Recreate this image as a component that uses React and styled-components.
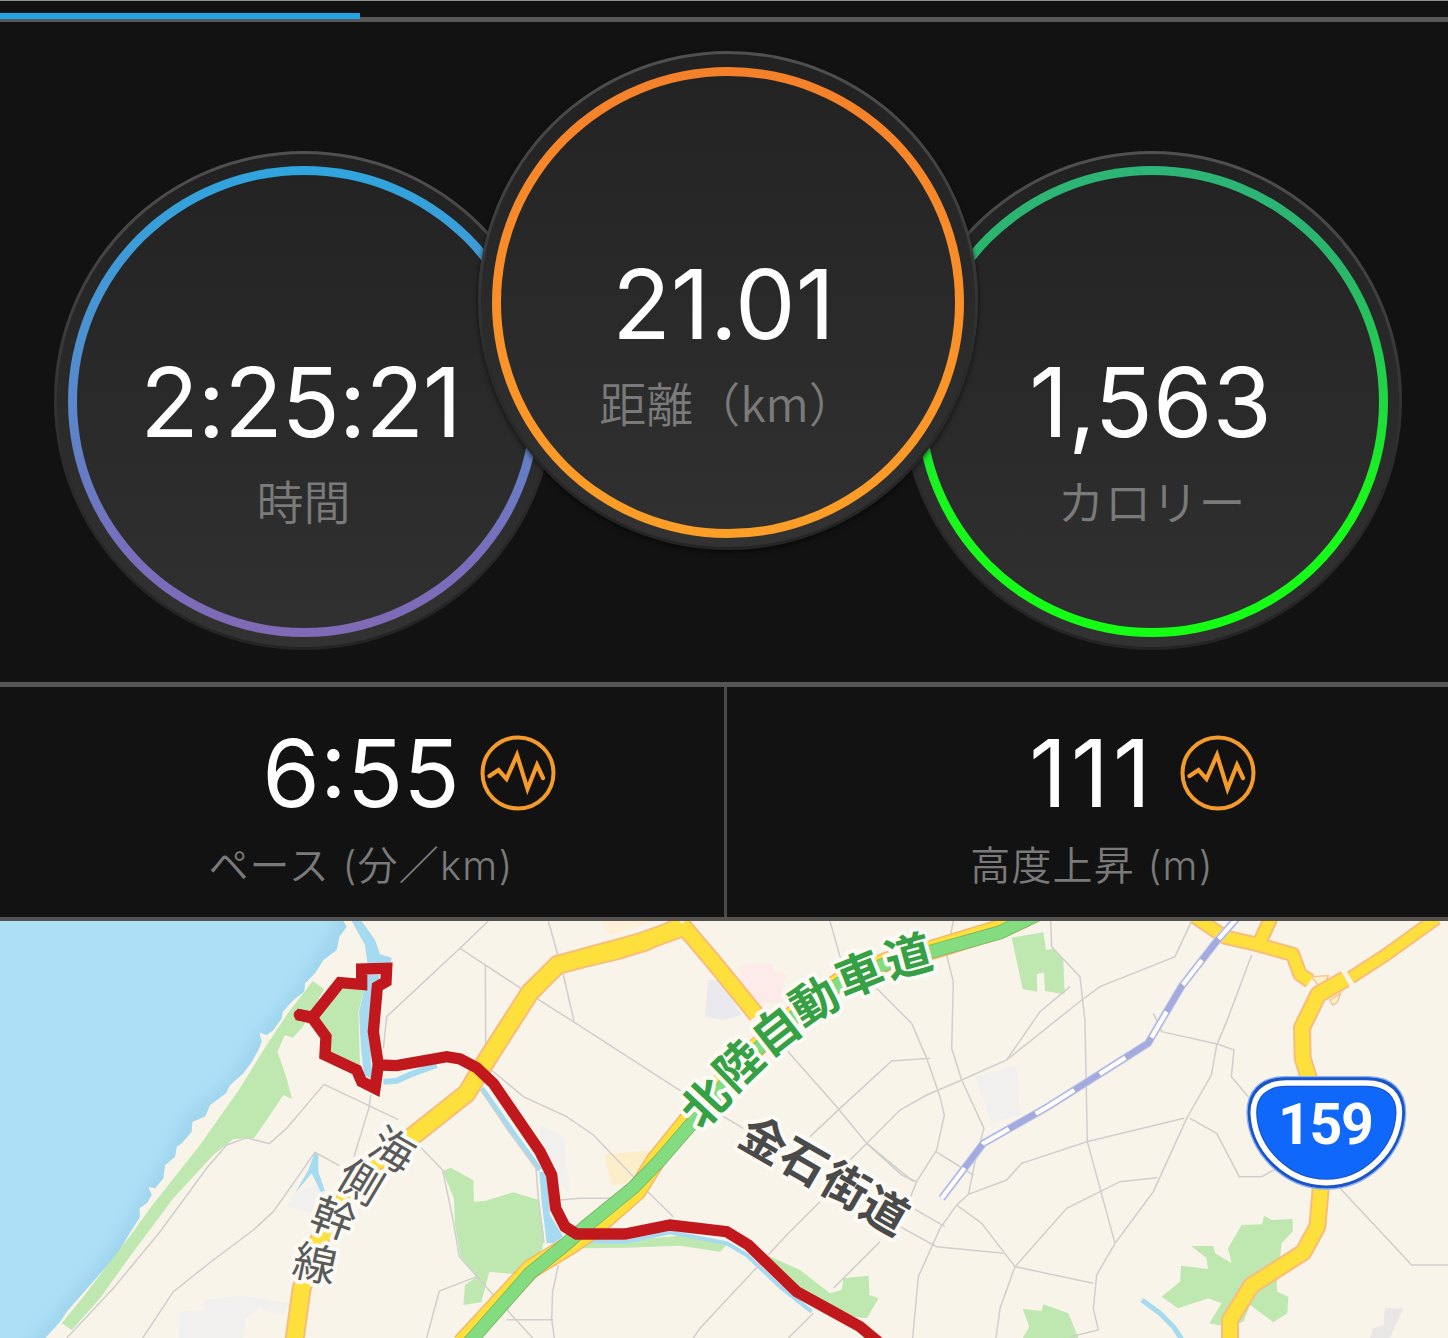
import React from 'react';
import styled, { createGlobalStyle } from 'styled-components';

const GlobalStyle = createGlobalStyle`
  * {
    box-sizing: border-box;
  }

  body {
    margin: 0;
    background-color: #121212;
    font-family: 'Inter', 'Noto Sans CJK JP', sans-serif;
  }
`;

const Screen = styled.div`
  display: flex;
  flex-direction: column;
  width: 1448px;
  height: 1338px;
  overflow: hidden;
  background-color: #121212;
  border-top: 1px solid #8c9090;
`;

const TabTrack = styled.div`
  height: 21px;
  padding-top: 12px;
  border-bottom: 5px solid #585858;
`;

const TabIndicator = styled.div`
  width: 360px;
  height: 6px;
  background-color: #23a3e6;
`;

const Summary = styled.section`
  display: flex;
  justify-content: center;
  height: 660px;
  padding: 29px 0 0 7px;
`;

/* Outer rim, brighter at the top */
const Disc = styled.div`
  position: relative;
  z-index: ${(props) => (props.$front ? 1 : 0)};
  flex: none;
  width: 500px;
  height: 499px;
  margin: ${(props) => (props.$front ? '0 -76px' : '100px 0 0')};
  padding: 3px;
  border-radius: 50%;
  background: linear-gradient(#505050, #3c3c3c 35%, #2a2a2b 65%, #242424);
  box-shadow: ${(props) => (props.$front ? '0 2px 5px rgba(0, 0, 0, 0.6)' : 'none')};
`;

const Band = styled.div`
  height: 100%;
  padding: ${(props) => (props.$front ? '13px 11px 9px' : '12px 11px 10px')};
  border-radius: 50%;
  background: linear-gradient(#212122, #2a2a2b 50%, #323232);
`;

const Ring = styled.div`
  height: 100%;
  padding: 9px;
  border-radius: 50%;
  background: linear-gradient(${(props) => props.$colors});
`;

const Face = styled.div`
  display: flex;
  flex-direction: column;
  align-items: center;
  height: 100%;
  padding-top: ${(props) => (props.$front ? 180 : 179)}px;
  border-radius: 50%;
  background: linear-gradient(#232323, #303030);
`;

const Value = styled.div`
  padding-right: ${(props) => props.$shift || 0}px;
  color: #ffffff;
  font-size: ${(props) => props.$size || 96}px;
  font-weight: 400;
  line-height: 96px;
  letter-spacing: ${(props) => props.$tracking || 0}px;
  white-space: nowrap;
`;

const Label = styled.div`
  margin-top: ${(props) => (props.$small ? 15 : 20)}px;
  color: #7a7a7a;
  font-family: ${(props) => (props.$small ? "'Inter', " : '')}'Noto Sans CJK JP', sans-serif;
  font-size: ${(props) => (props.$small ? 40 : 47)}px;
  font-weight: 350;
  line-height: 60px;
  letter-spacing: ${(props) => (props.$small ? 1.2 : 0)}px;
  white-space: nowrap;
`;

const Stats = styled.section`
  display: grid;
  grid-template-columns: 724px 1fr;
  height: 239px;
  border-top: 5px solid #555555;
  border-bottom: 4px solid #555252;
`;

const Stat = styled.div`
  display: flex;
  flex-direction: column;
  align-items: center;
  padding: 38px 2px 0 0;

  & + & {
    padding: 38px 0 0 9px;
    border-left: 3px solid #4a4a4a;
  }
`;

const StatRow = styled.div`
  display: grid;
  grid-template-columns: 1fr auto 1fr;
  align-items: center;
  width: 100%;
`;

const ChartButton = styled.button`
  grid-column: 3;
  width: 76px;
  height: 76px;
  margin-left: ${(props) => props.$gap}px;
  padding: 0;
  border: none;
  background: none;
`;

const StatValue = styled(Value)`
  grid-column: 2;
`;

const MapView = styled.svg`
  display: block;
  width: 1448px;
  height: 417px;
  flex: none;
  overflow: visible;
`;

const MapText = styled.text`
  font-family: 'Noto Sans CJK JP', sans-serif;
  font-size: ${(props) => props.$size}px;
  font-weight: ${(props) => props.$weight};
  fill: ${(props) => props.$color};
  stroke: #fcfaf4;
  stroke-width: 24px;
  stroke-linejoin: round;
  paint-order: stroke;
  text-anchor: middle;
`;

const ShieldText = styled.text`
  font-family: 'Roboto', sans-serif;
  font-size: 172px;
  font-weight: 700;
  letter-spacing: -4px;
  fill: #ffffff;
  text-anchor: middle;
`;

const discs = [
  {
    value: '2:25:21',
    label: '時間',
    colors: '#2fa5de, #4f8fd0 40%, #7a6dbb 85%, #806ab5',
    tracking: -1.1,
    shift: 6,
  },
  { value: '21.01', label: '距離（km）', colors: '#f5802a, #f98f29 50%, #fb9f27', shift: 8, front: true },
  { value: '1,563', label: 'カロリー', colors: '#2db577, #2ab56c 20%, #22d04a 45%, #18f61c 70%, #14ff14', shift: 2 },
];

const stats = [
  { value: '6:55', label: 'ペース (分／km)', gap: 20 },
  { value: '111', label: '高度上昇 (m)', gap: 25, tracking: 4 },
];

const coast =
  '0,18 1030,18 1040,35 1018,65 1010,105 970,135 945,175 915,205 912,230 880,255 848,290 845,310 820,345 800,360 778,352 785,380 775,405 755,440 730,475 690,510 678,535 630,570 615,605 577,620 575,650 545,685 530,695 525,725 495,750 490,790 465,820 445,815 455,840 440,865 418,880 420,905 395,945 350,1020 270,1110 200,1190 180,1220 130,1275 0,1275';

const shoreline =
  '1060,-20 1018,65 970,135 912,230 845,310 785,380 730,475 678,535 577,620 525,725 465,820 440,865 395,945 350,1020 270,1110 180,1220 100,1310';

const parks = [
  '938,198 972,222 930,300 905,340 878,368 855,360 832,410 860,490 876,552 850,540 800,615 762,670 700,672 640,720 520,850 400,1010 300,1150 215,1245 185,1225 250,1145 400,950 450,880 600,690 720,520 800,390 860,300',
  '1010,235 1040,212 1095,215 1075,290 1080,450 990,410 990,360 950,310',
  '1328,768 1352,758 1420,796 1422,860 1455,858 1540,832 1615,855 1632,960 1626,1005 1550,1078 1468,1070 1444,1162 1390,1170 1395,1110 1430,1085 1382,1025 1365,930 1362,850',
  '1740,985 1900,975 2060,960 2180,990 2160,1010 2040,992 1880,998 1750,1000',
  '2300,1020 2400,1065 2490,1135 2525,1125 2530,1090 2606,1082 2608,1140 2636,1150 2600,1210 2560,1205 2400,1140',
  '3035,68 3130,52 3138,105 3160,102 3190,135 3194,238 3135,228 3132,172 3110,178 3112,230 3068,222',
  '3068,1182 3125,1188 3130,1168 3205,1195 3240,1280 3062,1280 3088,1235',
  '3574,993 3640,993 3645,1015 3695,1045 3684,1000 3725,930 3786,928 3792,902 3815,915 3878,912 3878,950 3845,985 3830,1110 3832,1130 3865,1145 3862,1195 3820,1222 3750,1170 3730,1220 3680,1235 3628,1225 3665,1165 3625,1150 3534,1180 3485,1145 3540,1100 3543,1052 3624,1062 3620,1030',
];

const streets = [
  '200,1269 340,1120 480,950 620,760 680,690 740,668 808,686 860,640 972,508 1195,614',
  '1112,540 1108,575 1062,725',
  '428,1269 520,1130 640,1035 760,945 820,890 945,712 1018,752',
  '1465,18 1380,100 1160,305 1150,400',
  '1380,100 1570,225 1720,320 2030,520 2230,640',
  '1456,150 1457,390',
  '1645,18 1690,180 1722,318',
  '1250,685 1328,765 1360,920 1378,1025 1480,1140 1598,1269',
  '1478,468 1570,545 1700,605 1780,660 1945,832 2020,905',
  '1440,520 1520,640 1608,760 1615,850 1632,985',
  '1680,855 1740,850 1830,850',
  '1675,1050 1658,1130 1655,1212 1663,1269',
  '1520,1214 1660,1214',
  '1280,1269 1318,1128 1430,1085',
  '2490,18 2520,125 2635,225 2735,325 2780,430 2820,545 2833,600 2810,705 2750,800 2730,850',
  '2360,405 2510,575 2600,685 2705,780 2750,800',
  '2790,430 2675,438 2520,580 2430,665',
  '2600,685 2740,800',
  '3210,215 3120,290 3020,435 2885,495 2780,540 2700,585 2605,680 2550,735',
  '2860,18 2840,120 2860,200 2855,400 2885,495 2952,640 2925,740 2905,840',
  '2808,710 2920,780',
  '3152,18 3155,95 3240,185 3255,320 3262,680 3345,985',
  '3575,18 3525,125 3300,215 3245,255 3020,435',
  '3460,295 3485,350 3655,388 3702,405 3694,485 3745,545',
  '3755,120 3680,320 3650,390 3634,480 3560,610 3460,830 3345,985 3290,1080 3280,1180 3295,1245 3210,1265',
  '3552,610 3260,680 3065,745 3020,795 2905,838 2870,870 2820,940 2755,1085 2738,1269',
  '2700,935 2810,995 3010,1015',
  '2740,880 2835,935',
  '2870,870 2945,925 3045,1055 3280,1105',
  '3045,1055 3200,880 3360,800 3472,788',
  '3045,1055 3000,1180 2988,1269',
  '3570,610 3650,655 3718,785 3785,785 3830,760',
  '4020,820 4235,1050 4344,1050',
  '2460,860 2360,960 2240,1090 2100,1240 2080,1269',
  '2640,980 2500,1120',
  '2440,1195 2365,1269',
];

const yellowRoads = [
  { points: '882,1285 905,1120 950,990 1010,880 1090,770 1240,662 1400,535 1460,435 1590,232 1672,150 1920,82 2045,38', width: 48 },
  { points: '1672,150 1850,108 1935,82 2045,30', width: 44 },
  { points: '2045,28 2140,140 2270,300', width: 42 },
  { points: '3584,5 3674,66 3770,88 3878,118 3900,178 3930,198', width: 34 },
  { points: '3812,10 3780,80', width: 34 },
  { points: '4310,10 4154,122 4052,188', width: 30 },
  { points: '4036,192 3955,238 3906,338 3908,430 3930,500', width: 42 },
  { points: '3964,800 3952,935 3910,1012 3754,1112 3690,1215 3690,1285', width: 42 },
];

const highway =
  '1405,1285 1590,1075 1700,985 1760,932 1900,818 1980,735 2080,620 2220,455 2300,375 2400,290 2520,205 2660,145 2800,108 3000,52 3110,0';
const highwayBed =
  '1385,1285 1592,1062 1710,990 1780,942 1910,828 1968,735 2065,615 2210,450 2400,282 2520,200 2660,140 2800,103 3000,42 3080,5';

const route =
  '890,298 938,306 1020,203 1085,208 1085,162 1160,160 1158,200 1132,215 1120,350 1135,450 1190,452 1340,425 1380,432 1430,458 1480,505 1620,710 1655,780 1667,880 1695,935 1730,957 1875,957 2010,930 2180,950 2245,990 2390,1130 2490,1185 2580,1235 2640,1285';
const routeLoop = '890,298 938,310 978,365 975,420 1070,465 1085,500 1125,520 1135,450';

const railway = '3715,5 3649,80 3544,215 3444,385 3144,575 2950,685 2825,850';

const roadLabels = [
  {
    size: 130,
    weight: 400,
    color: '#5a5a5a',
    chars: [
      ['海', 1178, 703, 30],
      ['側', 1082, 800, 31],
      ['幹', 1000, 910, 20],
      ['線', 945, 1045, 12],
    ],
  },
  {
    size: 140,
    weight: 700,
    color: '#36a045',
    chars: [
      ['北', 2115, 562, -47],
      ['陸', 2215, 450, -44],
      ['自', 2328, 347, -38],
      ['動', 2442, 257, -30],
      ['車', 2578, 178, -22],
      ['道', 2725, 123, -15],
    ],
  },
  {
    size: 138,
    weight: 700,
    color: '#4a4a4a',
    chars: [
      ['金', 2292, 675, 30],
      ['石', 2412, 740, 30],
      ['街', 2537, 812, 30],
      ['道', 2655, 887, 30],
    ],
  },
];

const ChartIcon = () => (
  <svg width="76" height="76" viewBox="0 0 76 76" fill="none" stroke="#f59b2c" strokeLinecap="round">
    <circle cx="38" cy="38" r="35.500" strokeWidth="4" />
    <path d="M9.500 41 L18.500 35 L26.500 44 L37 20 L47.500 54 L57 30 L63 43" strokeWidth="4.200" />
  </svg>
);

const RoadLabel = ({ label }) =>
  label.chars.map(([char, x, y, angle]) => (
    <MapText
      key={char}
      $size={label.size}
      $weight={label.weight}
      $color={label.color}
      transform={`translate(${x} ${y}) rotate(${angle})`}
      y={label.size * 0.37}
    >
      {char}
    </MapText>
  ));

const RouteMap = () => (
  <MapView viewBox="0 18 4344 1251" fill="none">
    <defs>
      <clipPath id="frame">
        <rect y="18" width="4344" height="1251" />
      </clipPath>
      <clipPath id="sea">
        <polygon points={coast} />
      </clipPath>
      <filter id="shore">
        <feGaussianBlur stdDeviation="22" />
      </filter>
    </defs>

    <g clipPath="url(#frame)">
      <rect y="18" width="4344" height="1251" fill="#f8f4ea" />

      <polygon points={coast} fill="#ade0f7" />
      <g clipPath="url(#sea)">
        <polyline points={shoreline} stroke="#9dd3ec" strokeWidth="50" filter="url(#shore)" />
      </g>

      {/* Built-up blocks */}
      <g fill="#f1f0ef">
        <polygon points="610,1155 730,1142 870,1165 845,1200 780,1180 735,1210 730,1269 538,1269 540,1190 610,1185" />
        <polygon points="885,835 960,805 975,850 940,895 860,875" />
        <polygon points="1620,630 1690,665 1710,840 1630,750" />
        <polygon points="2125,195 2160,195 2225,300 2170,315 2115,305" fill="#eae9ee" />
        <polygon points="2925,485 3050,450 3060,600 2975,625" />
        <polygon points="4155,1180 4210,1180 4170,1269 4110,1269 4120,1240 4150,1230" fill="#e8e7e6" />
      </g>
      <polygon points="2222,150 2318,145 2322,170 2360,178 2345,225 2350,262 2275,265 2222,195" fill="#fcebe8" />
      <polygon points="1812,718 1960,705 1880,805 1835,812" fill="#fdeecb" />
      <polygon points="1800,18 1960,18 1830,62" fill="#fdf0d6" />

      {parks.map((points) => (
        <polygon key={points} points={points} fill="#bfe7b0" />
      ))}

      <g fill="#a6daf0">
        <polygon points="1055,18 1085,18 1125,75 1140,118 1175,128 1168,165 1105,165 1095,90" />
        <polygon points="1100,180 1140,180 1115,260 1112,440 1122,495 1092,480 1083,400 1077,290 1095,215" />
        <polygon points="945,710 955,720 955,770 975,828 962,830 935,775 885,835 925,765" />
        <polygon points="1618,770 1640,770 1650,900 1690,965 1660,985 1640,985 1625,860" />
      </g>
      <g stroke="#a6daf0" strokeLinejoin="round">
        <polyline points="1150,500 1190,497 1240,475 1310,450" strokeWidth="18" />
        <polyline points="1445,520 1540,655 1620,765" strokeWidth="16" />
        <polyline points="1720,978 1880,980 2010,952 2180,985 2240,1020 2340,1115 2435,1190" strokeWidth="12" />
        <polyline points="3426,1155 3480,1195 3520,1235 3550,1280" strokeWidth="15" />
      </g>

      {streets.map((points) => (
        <polyline key={points} points={points} stroke="#d0cfcd" strokeWidth="4.500" />
      ))}

      {/* Interchange ramps */}
      <g fill="#fdf0cf" stroke="#f8bf85" strokeWidth="4">
        <path d="M3935 185 L3985 182 L3978 200 L3955 212 Z" />
        <path d="M3990 255 L4022 235 L4012 262 L3998 270 Z" />
      </g>

      {yellowRoads.map((road) => (
        <polyline key={road.points} points={road.points} stroke="#f8bd7c" strokeWidth={road.width + 12} strokeLinejoin="round" />
      ))}
      {yellowRoads.map((road) => (
        <polyline key={road.points} points={road.points} stroke="#fee03c" strokeWidth={road.width} strokeLinejoin="round" />
      ))}

      <polyline points={highwayBed} stroke="#f8b26c" strokeWidth="60" />
      <polyline points={highwayBed} stroke="#fee03c" strokeWidth="52" />
      <polyline points={highway} stroke="#7cb564" strokeWidth="42" />
      <polyline points={highway} stroke="#84dc80" strokeWidth="37" />

      <polyline points={railway} stroke="#c4caec" strokeWidth="24" />
      <polyline points={railway} stroke="#a2aade" strokeWidth="18" />
      <polyline
        points={railway}
        stroke="#ffffff"
        strokeWidth="13"
        strokeDasharray="89 81 94 94 90 100 92 90 136 92 92 89 118 200"
      />

      <g stroke="#c0181d" strokeWidth="34">
        <polyline points={route} />
        <polyline points={routeLoop} />
        <circle cx="897" cy="299" r="8" strokeWidth="16" />
      </g>
    </g>

    {roadLabels.map((label) => (
      <RoadLabel key={label.color} label={label} />
    ))}

    <g transform="translate(3144 0)">
      <path
        d="M710 485 H960 C1035 485 1074 530 1073 595 C1070 715 960 822 835 822 C710 822 600 715 597 595 C596 530 635 485 710 485 Z"
        fill="#1a56c8"
        stroke="#8ab0f2"
        strokeWidth="4"
      />
      <path
        d="M715 504 H955 C1020 504 1055 540 1054 595 C1050 705 950 803 835 803 C720 803 620 705 616 595 C615 540 650 504 715 504 Z"
        fill="#1068fa"
        stroke="#1a56c8"
        strokeWidth="24"
      />
      <path
        d="M715 504 H955 C1020 504 1055 540 1054 595 C1050 705 950 803 835 803 C720 803 620 705 616 595 C615 540 650 504 715 504 Z"
        stroke="#ffffff"
        strokeWidth="17"
      />
      <ShieldText x="832" y="688">
        159
      </ShieldText>
    </g>
  </MapView>
);

const App = () => (
  <>
    <GlobalStyle />
    <Screen>
      <TabTrack>
        <TabIndicator />
      </TabTrack>

      <Summary>
        {discs.map((disc) => (
          <Disc key={disc.label} $front={disc.front}>
            <Band $front={disc.front}>
              <Ring $colors={disc.colors}>
                <Face $front={disc.front}>
                  <Value $tracking={disc.tracking} $shift={disc.shift}>
                    {disc.value}
                  </Value>
                  <Label>{disc.label}</Label>
                </Face>
              </Ring>
            </Band>
          </Disc>
        ))}
      </Summary>

      <Stats>
        {stats.map((stat) => (
          <Stat key={stat.label}>
            <StatRow>
              <StatValue $size={93} $tracking={stat.tracking}>
                {stat.value}
              </StatValue>
              <ChartButton $gap={stat.gap}>
                <ChartIcon />
              </ChartButton>
            </StatRow>
            <Label $small>{stat.label}</Label>
          </Stat>
        ))}
      </Stats>

      <RouteMap />
    </Screen>
  </>
);

export default App;
